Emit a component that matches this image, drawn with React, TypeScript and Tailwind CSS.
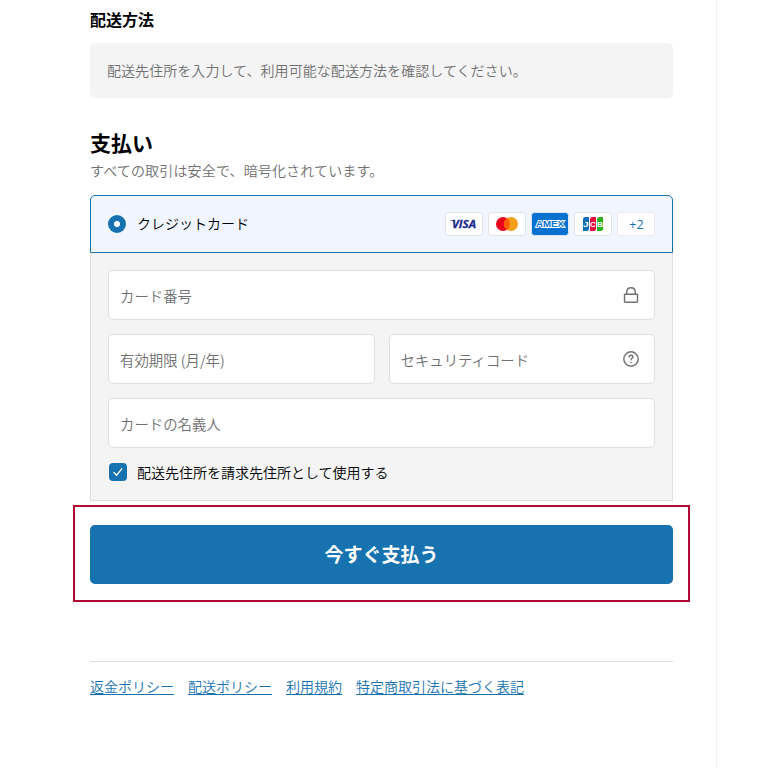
import type { ReactNode } from "react"

const policies = ["返金ポリシー", "配送ポリシー", "利用規約", "特定商取引法に基づく表記"]

type TFieldProps = {
  label: string
  icon?: ReactNode
}

function Field({ label, icon }: TFieldProps) {
  return (
    <label className="flex h-[50px] flex-1 items-center justify-between rounded-[5px] border border-[#dedede] bg-white pr-[15px] pl-[11px]">
      <span className="pt-px text-[14.4px] leading-5 text-[#707070]">{label}</span>
      {icon}
    </label>
  )
}

function LockIcon() {
  return (
    <svg className="mb-px size-4" viewBox="0 0 16 16" fill="none" stroke="#707070" strokeWidth="1.4">
      <rect x="1.5" y="7.2" width="13" height="8" rx="0.6" />
      <path d="M3.7 7.2V5.2C3.7 2.4 5.4.7 8 .7s4.3 1.7 4.3 4.5v2" />
    </svg>
  )
}

function HelpIcon() {
  return (
    <svg className="mb-px size-4" viewBox="0 0 16 16" fill="none" stroke="#707070" strokeWidth="1.4">
      <circle cx="8" cy="8" r="7.2" />
      <path d="M6.1 6.1C6.1 4.9 6.9 4.2 8 4.2s1.9.7 1.9 1.7c0 1.3-1.9 1.4-1.9 2.9" strokeLinecap="round" />
      <circle cx="8" cy="11.5" r="0.8" fill="#707070" stroke="none" />
    </svg>
  )
}

function Visa() {
  return (
    <svg width="38" height="24" viewBox="0 0 38 24">
      <rect x="0.5" y="0.5" width="37" height="23" rx="3" fill="#fff" stroke="#dfe3ea" />
      <text
        x="7"
        y="16"
        textLength="24"
        lengthAdjust="spacingAndGlyphs"
        fontFamily="Open Sans, sans-serif"
        fontSize="11.3"
        fontWeight="700"
        fontStyle="italic"
        fill="#1a2b8c"
        stroke="#1a2b8c"
        strokeWidth="0.3"
      >
        VISA
      </text>
      <path d="M5 8h4.2l1 2.5C8.8 9.2 7 8.6 5 8.3z" fill="#1a2b8c" />
    </svg>
  )
}

function Mastercard() {
  return (
    <svg width="38" height="24" viewBox="0 0 38 24">
      <rect x="0.5" y="0.5" width="37" height="23" rx="3" fill="#fff" stroke="#dfe3ea" />
      <circle cx="15" cy="12" r="7" fill="#eb001b" />
      <circle cx="23" cy="12" r="7" fill="#f79e1b" />
      <path d="M19 6.25a7 7 0 0 1 0 11.5a7 7 0 0 1 0-11.5z" fill="#ff5f00" />
    </svg>
  )
}

function Amex() {
  return (
    <svg width="38" height="24" viewBox="0 0 38 24">
      <rect x="0.5" y="0.5" width="37" height="23" rx="3" fill="#0571d1" stroke="#d9e8f7" />
      <text
        x="5"
        y="15.2"
        textLength="28"
        lengthAdjust="spacingAndGlyphs"
        fontFamily="Liberation Sans, sans-serif"
        fontSize="8.8"
        fontWeight="700"
        fill="#0571d1"
        stroke="#fff"
        strokeWidth="1.9"
        paintOrder="stroke"
      >
        AMEX
      </text>
    </svg>
  )
}

function Jcb() {
  return (
    <svg width="38" height="24" viewBox="0 0 38 24">
      <rect x="0.5" y="0.5" width="37" height="23" rx="3" fill="#fff" stroke="#dfe3ea" />
      <path d="M11.5 5H15v11.5a2.5 2.5 0 0 1-2.5 2.5H9V7.5A2.5 2.5 0 0 1 11.5 5z" fill="#0e6fb8" />
      <path d="M18.5 5H22v11.5a2.5 2.5 0 0 1-2.5 2.5H16V7.5A2.5 2.5 0 0 1 18.5 5z" fill="#e6093d" />
      <path d="M25.5 5H29v11.5a2.5 2.5 0 0 1-2.5 2.5H23V7.5A2.5 2.5 0 0 1 25.5 5z" fill="#2bb01c" />
      <g fontFamily="Liberation Sans, sans-serif" fontSize="7.5" fontWeight="700" fill="#fff">
        <text x="9.3" y="14.5" textLength="5.3" lengthAdjust="spacingAndGlyphs">J</text>
        <text x="16.1" y="14.5" textLength="5.7" lengthAdjust="spacingAndGlyphs">C</text>
        <text x="23" y="14.5" textLength="6" lengthAdjust="spacingAndGlyphs">B</text>
      </g>
    </svg>
  )
}

export default function App() {
  return (
    <div className="h-screen overflow-hidden bg-white font-['Noto_Sans_CJK_JP',sans-serif] font-[350] text-black">
      <main className="h-full w-[717px] border-r border-[#f0f0f0] pt-[7px] pr-[43px] pl-[90px]">
        <section>
          <h3 className="text-base leading-6 font-bold">配送方法</h3>
          <p className="mt-3 flex h-[55px] items-center rounded-[5px] bg-[#f4f4f4] px-[17px] pb-0.5 text-sm tracking-[0.06px] text-[#707070]">
            配送先住所を入力して、利用可能な配送方法を確認してください。
          </p>
        </section>

        <section className="mt-[30px]">
          <h2 className="text-[21px] leading-7 font-bold">支払い</h2>
          <p className="mt-1 text-sm leading-5 tracking-[0.16px] text-[#707070]">
            すべての取引は安全で、暗号化されています。
          </p>

          <div className="mt-[15px] flex h-[58px] items-center rounded-t-[5px] border border-[#1773b0] bg-[#f0f5ff] pr-[17px] pl-[17px]">
            <span className="flex size-[18px] items-center justify-center rounded-full bg-[#1773b0]">
              <span className="size-1.5 rounded-full bg-white" />
            </span>
            <span className="ml-[11px] flex-1 pb-0.5 text-sm">クレジットカード</span>
            <div className="flex gap-[5px]">
              <Visa />
              <Mastercard />
              <Amex />
              <Jcb />
              <span className="flex h-6 w-[38px] items-center justify-center rounded-[3px] border border-[#e8ebf0] bg-white pt-0.5 pl-px font-['Open_Sans',sans-serif] text-[12.5px] font-normal text-[#1773b0]">
                +2
              </span>
            </div>
          </div>

          <div className="flex h-[248px] flex-col gap-3.5 border border-t-0 border-[#dedede] bg-[#f4f4f4] px-[17px] pt-[17px]">
            <div className="flex">
              <Field label="カード番号" icon={<LockIcon />} />
            </div>
            <div className="flex gap-3.5">
              <Field label="有効期限 (月/年)" />
              <Field label="セキュリティコード" icon={<HelpIcon />} />
            </div>
            <div className="flex">
              <Field label="カードの名義人" />
            </div>
            <label className="flex items-center pl-px">
              <span className="flex size-[18px] items-center justify-center rounded bg-[#1773b0]">
                <svg className="size-3" viewBox="0 0 12 12" fill="none" stroke="#fff" strokeWidth="1.3">
                  <path d="M2 6.5 4.7 9.2 9.7 2.8" strokeLinecap="round" strokeLinejoin="round" />
                </svg>
              </span>
              <span className="ml-2.5 text-sm leading-5">配送先住所を請求先住所として使用する</span>
            </label>
          </div>
        </section>

        <div className="relative mt-6">
          <button type="button" className="h-[59px] w-full rounded-[5px] bg-[#1773b0] text-[19px] font-bold text-white">
            今すぐ支払う
          </button>
          <div className="pointer-events-none absolute -top-5 -right-[17px] -bottom-[18px] -left-[17px] border-2 border-[#b00830]" />
        </div>

        <footer className="mt-[77px] border-t border-[#dedede] pt-3.5">
          <nav className="flex gap-3.5 text-sm leading-5 text-[#1773b0]">
            {policies.map((policy) => (
              <a key={policy} href="#" className="underline underline-offset-2">
                {policy}
              </a>
            ))}
          </nav>
        </footer>
      </main>
    </div>
  )
}
